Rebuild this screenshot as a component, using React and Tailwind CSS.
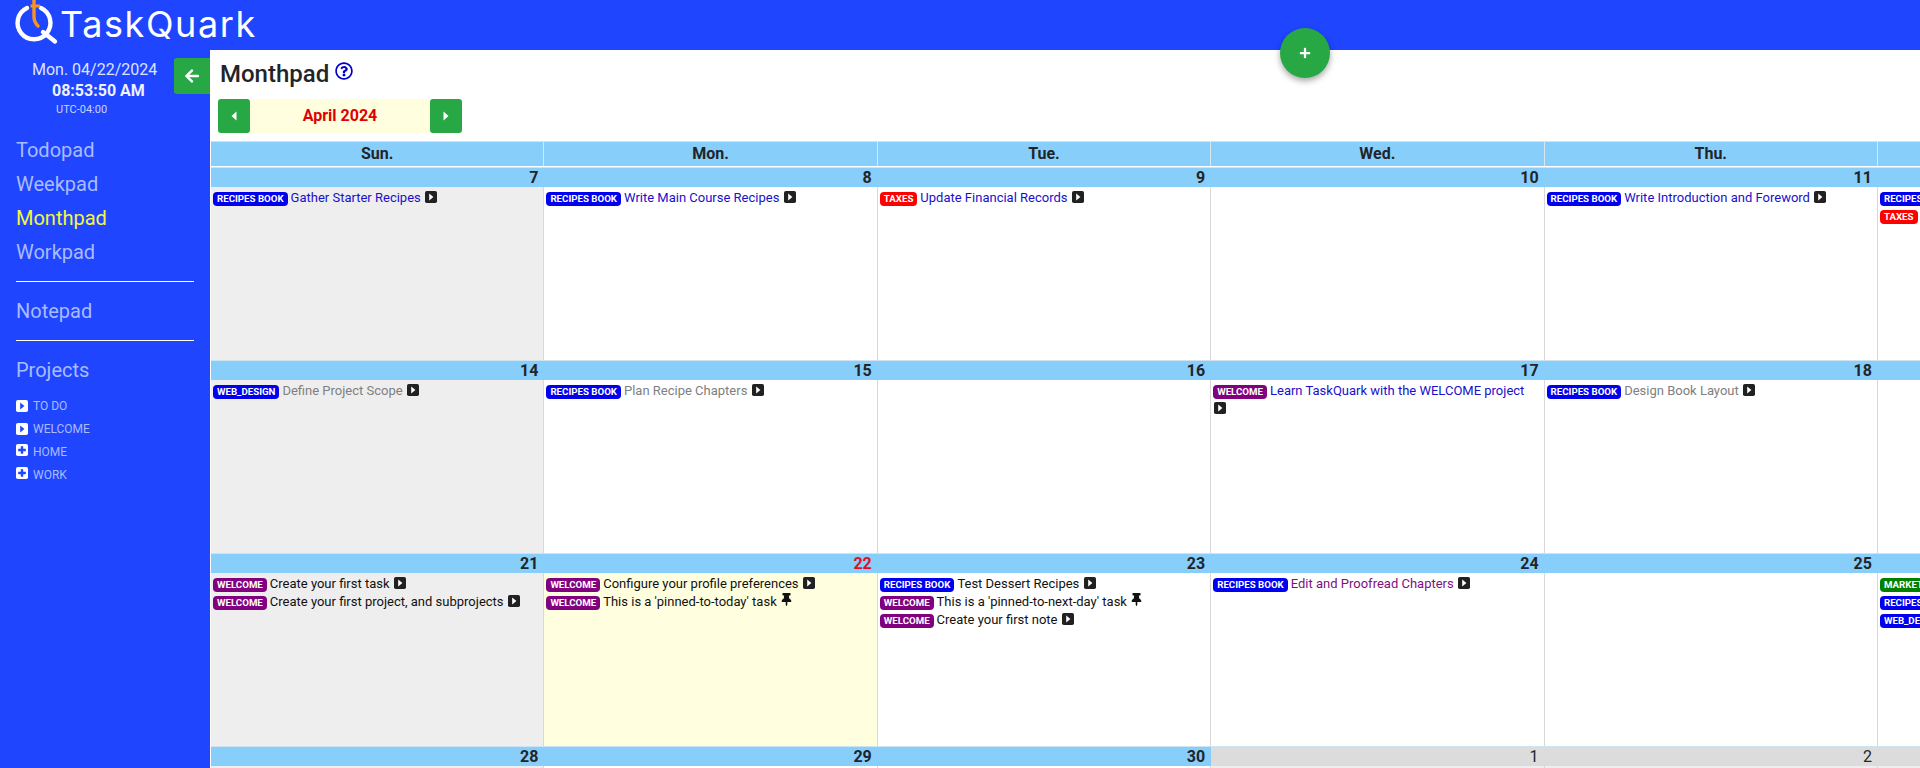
import React from 'react';
import { FaArrowLeft, FaPlus, FaThumbtack, FaRegQuestionCircle } from 'react-icons/fa';

const BLUE = 'bg-[#0000ee]', PURPLE = 'bg-[#800080]', RED = 'bg-[#ff0000]', GREEN = 'bg-[#008000]';
const tBlue = 'text-[#1a0fcc]', tGrey = 'text-[#808080]', tBlack = 'text-[#111111]', tPurple = 'text-[#800f80]';

function CaretSquare({ dark = true, className = '' }) {
  return (
    <svg viewBox="0 0 12 12" width="12" height="12" className={className}>
      <rect x="0" y="0" width="12" height="12" rx="1.8" fill={dark ? '#212121' : '#ffffff'} />
      <path d="M4.2 2.6 L8.4 6 L4.2 9.4 Z" fill={dark ? '#ffffff' : '#1f45ff'} />
    </svg>
  );
}

function PlusSquare() {
  return (
    <svg viewBox="0 0 12 12" width="12" height="12" className="mb-[4px]">
      <rect x="0" y="0" width="12" height="12" rx="1.8" fill="#ffffff" />
      <path d="M6 2.2 V9.8 M2.2 6 H9.8" stroke="#1f45ff" strokeWidth="2.4" />
    </svg>
  );
}

function Task({ color, tag, text, tc, pin }) {
  return (
    <div className="text-[13px] leading-[18px]">
      <span className={`${color} inline-block rounded-[4px] px-[4px] align-baseline text-[9.7px] font-bold leading-[14px] text-white`}>{tag}</span>
      <span className={`${tc} ml-[3px]`}>{text}</span>{' '}
      {pin ? (
        <FaThumbtack className="inline-block align-[0px] text-[#111111]" size={13} />
      ) : (
        <CaretSquare className="ml-px inline-block align-[-1px]" />
      )}
    </div>
  );
}

function Day({ n, sun, today, dim, tasks = [] }) {
  const head = dim ? 'bg-[#dcdcdc] font-normal' : 'bg-[#87cefa] font-bold';
  const body = today ? 'bg-[#ffffe0]' : sun ? 'bg-[#eeeeee]' : dim ? 'bg-[#eeeeee]' : 'bg-white';
  return (
    <div className="min-w-0">
      <div className="border-t border-[#cfe3f0]">
        <div className={`${head} h-[19px] pr-[6px] text-right text-[16px] leading-[19px] ${today ? 'text-[#dd1122]' : 'text-[#212529]'}`}>{n}</div>
      </div>
      <div className={`${body} h-[173px] overflow-hidden border-r border-[#d8d8d8] pl-[2px] pr-[6px] pt-[2px]`}>
        {tasks.map((t, i) => <Task key={i} {...t} />)}
      </div>
    </div>
  );
}

const R = 'RECIPES BOOK', W = 'WELCOME';
const weeks = [
  [
    { n: 7, sun: true, tasks: [{ color: BLUE, tag: R, text: 'Gather Starter Recipes', tc: tBlue }] },
    { n: 8, tasks: [{ color: BLUE, tag: R, text: 'Write Main Course Recipes', tc: tBlue }] },
    { n: 9, tasks: [{ color: RED, tag: 'TAXES', text: 'Update Financial Records', tc: tBlue }] },
    { n: 10 },
    { n: 11, tasks: [{ color: BLUE, tag: R, text: 'Write Introduction and Foreword', tc: tBlue }] },
    { n: 12, tasks: [{ color: BLUE, tag: R, text: '', tc: tBlue }, { color: RED, tag: 'TAXES', text: '', tc: tBlue }] },
  ],
  [
    { n: 14, sun: true, tasks: [{ color: BLUE, tag: 'WEB_DESIGN', text: 'Define Project Scope', tc: tGrey }] },
    { n: 15, tasks: [{ color: BLUE, tag: R, text: 'Plan Recipe Chapters', tc: tGrey }] },
    { n: 16 },
    { n: 17, tasks: [{ color: PURPLE, tag: W, text: 'Learn TaskQuark with the WELCOME project', tc: tBlue }] },
    { n: 18, tasks: [{ color: BLUE, tag: R, text: 'Design Book Layout', tc: tGrey }] },
    { n: 19 },
  ],
  [
    { n: 21, sun: true, tasks: [
      { color: PURPLE, tag: W, text: 'Create your first task', tc: tBlack },
      { color: PURPLE, tag: W, text: 'Create your first project, and subprojects', tc: tBlack },
    ] },
    { n: 22, today: true, tasks: [
      { color: PURPLE, tag: W, text: 'Configure your profile preferences', tc: tBlack },
      { color: PURPLE, tag: W, text: "This is a 'pinned-to-today' task", tc: tBlack, pin: true },
    ] },
    { n: 23, tasks: [
      { color: BLUE, tag: R, text: 'Test Dessert Recipes', tc: tBlack },
      { color: PURPLE, tag: W, text: "This is a 'pinned-to-next-day' task", tc: tBlack, pin: true },
      { color: PURPLE, tag: W, text: 'Create your first note', tc: tBlack },
    ] },
    { n: 24, tasks: [{ color: BLUE, tag: R, text: 'Edit and Proofread Chapters', tc: tPurple }] },
    { n: 25 },
    { n: 26, tasks: [
      { color: GREEN, tag: 'MARKETING', text: '', tc: tBlue },
      { color: BLUE, tag: R, text: '', tc: tBlue },
      { color: BLUE, tag: 'WEB_DESIGN', text: '', tc: tBlue },
    ] },
  ],
  [
    { n: 28, sun: true },
    { n: 29 },
    { n: 30 },
    { n: 1, dim: true },
    { n: 2, dim: true },
    { n: 3, dim: true },
  ],
];

const dows = ['Sun.', 'Mon.', 'Tue.', 'Wed.', 'Thu.', 'Fri.'];

function Logo() {
  return (
    <div className="flex h-[50px] items-start">
      <svg width="60" height="50" viewBox="0 0 60 50" className="shrink-0">
        <path d="M27 8 A16.4 16.4 0 1 0 41 8" fill="none" stroke="#ffffff" strokeWidth="4.4" strokeLinecap="round" />
        <path d="M43 32 L55 41.5" stroke="#ffffff" strokeWidth="4.4" strokeLinecap="round" />
        <path d="M34 0 V17 Q34 22 38 26" fill="none" stroke="#f7931e" strokeWidth="3.4" strokeLinecap="round" />
        <path d="M30.5 6 H40" stroke="#f7931e" strokeWidth="3" />
      </svg>
      <span className="mt-[4px] font-['Inter'] text-[36px] leading-[40px] tracking-[1.6px] text-white">TaskQuark</span>
    </div>
  );
}

function NavItem({ children, active }) {
  return <div className={`h-[34px] pl-[16px] text-[20px] leading-[34px] ${active ? 'text-[#f2f542]' : 'text-[#a8bcff]'}`}>{children}</div>;
}

function Project({ children, plus }) {
  return (
    <div className="flex h-[23px] items-center pl-[16px] text-[12px] text-[#a8bcff]">
      {plus ? <PlusSquare /> : <CaretSquare dark={false} />}
      <span className="ml-[5px]">{children}</span>
    </div>
  );
}

export default function App() {
  return (
    <div className="relative flex h-[768px] w-[1920px] flex-col overflow-hidden bg-white font-['Roboto',sans-serif]">
      <header className="h-[50px] shrink-0 bg-[#1f45ff]"><Logo /></header>
      <div className="flex min-h-0 flex-1">
        <aside className="w-[210px] shrink-0 bg-[#1f45ff]">
          <div className="relative h-[83px]">
            <div className="pl-[32px] pt-[10px] text-[16px] leading-[20px] text-[#dbe3ff]">Mon. 04/22/2024</div>
            <div className="pl-[52px] pt-[1px] text-[16px] font-bold leading-[20px] text-[#eef1ff]">08:53:50 AM</div>
            <div className="pl-[56px] pt-[2px] text-[11px] leading-[14px] text-[#c8d4ff]">UTC-04:00</div>
            <button className="absolute right-0 top-[8px] flex h-[36px] w-[36px] items-center justify-center rounded-l-[3px] bg-[#28a745] text-white">
              <FaArrowLeft size={16} />
            </button>
          </div>
          <div>
            <NavItem>Todopad</NavItem>
            <NavItem>Weekpad</NavItem>
            <NavItem active>Monthpad</NavItem>
            <NavItem>Workpad</NavItem>
          </div>
          <div className="ml-[16px] mr-[16px] mt-[12px] h-px bg-white" />
          <div className="mt-[12px]"><NavItem>Notepad</NavItem></div>
          <div className="ml-[16px] mr-[16px] mt-[12px] h-px bg-white" />
          <div className="mt-[12px]"><NavItem>Projects</NavItem></div>
          <div className="mt-[7px]">
            <Project>TO DO</Project>
            <Project>WELCOME</Project>
            <Project plus>HOME</Project>
            <Project plus>WORK</Project>
          </div>
        </aside>
        <main className="min-w-0 flex-1 overflow-hidden">
          <div className="flex h-[40px] items-start pl-[10px] pt-[7px]">
            <h1 className="text-[24px] font-medium leading-[34px] text-[#212529]">Monthpad</h1>
            <FaRegQuestionCircle className="ml-[6px] mt-[5px] text-[#0000cc]" size={18} />
          </div>
          <div className="ml-[8px] mt-[9px] flex h-[34px] w-[244px]">
            <button className="flex w-[32px] items-center justify-center rounded-[3px] bg-[#28a745]">
              <svg width="6" height="10" viewBox="0 0 6 10"><path d="M5.5 0.5 V9.5 L0.5 5 Z" fill="#ffffff" /></svg>
            </button>
            <div className="flex-1 bg-[#ffffe0] text-center text-[16px] font-bold leading-[34px] text-[#e00000]">April 2024</div>
            <button className="flex w-[32px] items-center justify-center rounded-[3px] bg-[#28a745]">
              <svg width="6" height="10" viewBox="0 0 6 10"><path d="M0.5 0.5 V9.5 L5.5 5 Z" fill="#ffffff" /></svg>
            </button>
          </div>
          <div className="mt-[8px] w-[2335px] pl-px">
            <div className="grid grid-cols-[repeat(7,333.4px)] border-t border-[#cfe3f0]">
              {dows.map((d) => (
                <div key={d} className="h-[24px] border-r border-[#d8e8f2] bg-[#87cefa] text-center text-[16px] font-bold leading-[24px] text-[#212529]">{d}</div>
              ))}
              <div className="h-[24px] bg-[#87cefa]" />
            </div>
            <div className="h-px" />
            {weeks.map((w, i) => (
              <div key={i} className="grid grid-cols-[repeat(7,333.4px)]">
                {w.map((d) => <Day key={d.n} {...d} />)}
                <div />
              </div>
            ))}
          </div>
        </main>
      </div>
      <button className="absolute left-[1280px] top-[28px] flex h-[50px] w-[50px] items-center justify-center rounded-full bg-[#28a745] text-white shadow-[0_3px_6px_rgba(0,0,0,0.35)]">
        <FaPlus size={12} />
      </button>
    </div>
  );
}
